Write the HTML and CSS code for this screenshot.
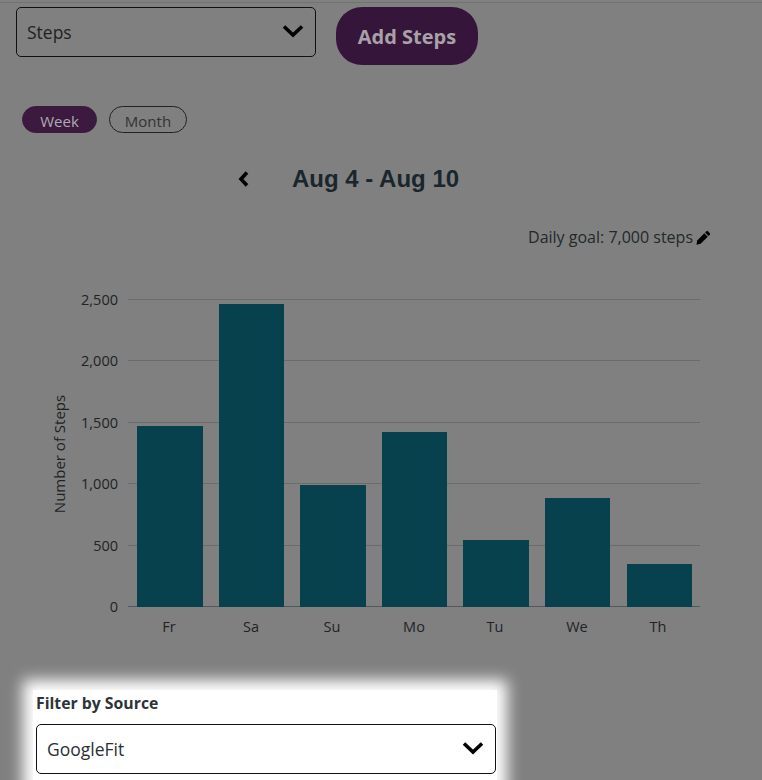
FILE: index.html
```html
<!DOCTYPE html>
<html>
<head>
  <title>Steps</title>
  <link rel="stylesheet" href="styles.css">
</head>
<body>
  <div class="page">
    <div class="top-row">
      <div class="select select-dark">
        <span>Steps</span>
        <svg class="chevron" viewBox="0 0 22 14"><path d="M2 2.5 L11 11 L20 2.5" /></svg>
      </div>
      <button class="add-button">Add Steps</button>
    </div>

    <div class="pills">
      <span class="pill pill-active">Week</span>
      <span class="pill">Month</span>
    </div>

    <div class="date-row">
      <svg class="back" viewBox="0 0 12 18"><path d="M9.5 2.5 L3.5 9 L9.5 15.5" /></svg>
      <h2 class="date-title">Aug 4 - Aug 10</h2>
    </div>

    <div class="goal">
      <span>Daily goal: 7,000 steps</span>
      <svg class="pencil" viewBox="0 0 16 16">
        <path d="M11.2 1.2 a1 1 0 0 1 1.4 0 l2.2 2.2 a1 1 0 0 1 0 1.4 l-1.5 1.5 -3.6 -3.6 z" />
        <path d="M8.9 3.5 l3.6 3.6 -7.6 7.6 -4.4 .9 .8 -4.5 z" />
      </svg>
    </div>

    <svg class="chart" viewBox="0 0 762 370" width="762" height="370">
      <g class="grid">
        <line x1="128" x2="700" y1="19.5" y2="19.5" />
        <line x1="128" x2="700" y1="80.5" y2="80.5" />
        <line x1="128" x2="700" y1="142.5" y2="142.5" />
        <line x1="128" x2="700" y1="203.5" y2="203.5" />
        <line x1="128" x2="700" y1="265.5" y2="265.5" />
        <line class="axis" x1="128" x2="700" y1="326.5" y2="326.5" />
      </g>
      <g class="bars">
        <rect x="137" y="146" width="66" height="181" />
        <rect x="219" y="24" width="65" height="303" />
        <rect x="300" y="205" width="66" height="122" />
        <rect x="382" y="152" width="65" height="175" />
        <rect x="463" y="260" width="66" height="67" />
        <rect x="545" y="218" width="65" height="109" />
        <rect x="627" y="284" width="65" height="43" />
      </g>
      <g class="y-labels">
        <text x="118" y="25">2,500</text>
        <text x="118" y="86">2,000</text>
        <text x="118" y="148">1,500</text>
        <text x="118" y="209">1,000</text>
        <text x="118" y="271">500</text>
        <text x="118" y="332">0</text>
      </g>
      <g class="x-labels">
        <text x="169" y="352">Fr</text>
        <text x="251" y="352">Sa</text>
        <text x="332" y="352">Su</text>
        <text x="414" y="352">Mo</text>
        <text x="495" y="352">Tu</text>
        <text x="577" y="352">We</text>
        <text x="658" y="352">Th</text>
      </g>
      <text class="y-title" transform="translate(65 174) rotate(-90)">Number of Steps</text>
    </svg>

    <div class="filter">
      <label class="filter-label">Filter by Source</label>
      <div class="select select-light">
        <span>GoogleFit</span>
        <svg class="chevron" viewBox="0 0 22 14"><path d="M2 2.5 L11 11 L20 2.5" /></svg>
      </div>
    </div>
  </div>
</body>
</html>
```

FILE: styles.css
```css
html, body {
  margin: 0;
  padding: 0;
  height: 100%;
  overflow: hidden;
  background-color: #808080;
}

.page {
  height: 780px;
  box-sizing: border-box;
  border-top: 1px solid #727272;
  margin-top: 2px;
  font-family: "Open Sans", sans-serif;
  color: #1c2226;
}

.top-row {
  display: flex;
  align-items: flex-start;
  gap: 20px;
  padding: 4px 0 0 16px;
}

.select {
  display: flex;
  align-items: center;
  justify-content: space-between;
  box-sizing: border-box;
  height: 50px;
  border: 1px solid #111;
  border-radius: 5px;
  font-size: 17.5px;
  padding: 0 11px 0 10px;
}

.select-dark {
  width: 300px;
  color: #222;
}

.select-dark span {
  margin-bottom: 1px;
}

.select-light {
  width: 460px;
  background-color: #fff;
  color: #2b2f33;
}

.chevron {
  width: 22px;
  height: 14px;
  margin-bottom: 3px;
}

.chevron path, .back path {
  fill: none;
  stroke: #000;
  stroke-width: 3.6;
}

.add-button {
  width: 142px;
  height: 58px;
  border: none;
  border-radius: 26px;
  background-color: #35163a;
  color: #a8a2a8;
  font-family: "Open Sans", sans-serif;
  font-size: 20px;
  font-weight: 700;
  padding: 0;
}

.pills {
  display: flex;
  gap: 12px;
  padding: 41px 0 0 22px;
}

.pill {
  box-sizing: border-box;
  height: 27px;
  line-height: 29px;
  width: 78px;
  text-align: center;
  border: 1px solid #222;
  border-radius: 14px;
  font-size: 15px;
  color: #333;
}

.pill-active {
  width: 75px;
  background-color: #3c1a3f;
  border-color: #3c1a3f;
  color: #b0aab0;
}

.date-row {
  display: flex;
  align-items: center;
  height: 34px;
  padding: 29px 0 0 237px;
}

.back {
  width: 13px;
  height: 18px;
}

.date-title {
  margin: 0 0 0 42px;
  font-family: "Liberation Sans", sans-serif;
  font-size: 24px;
  font-weight: 700;
  color: #1a262d;
}

.goal {
  display: flex;
  align-items: center;
  justify-content: flex-end;
  gap: 3px;
  height: 24px;
  margin-top: 29px;
  padding-right: 51px;
  font-size: 16px;
  color: #23282b;
}

.pencil {
  width: 15px;
  height: 15px;
  fill: #000;
}

.chart {
  display: block;
  margin-top: 31px;
  font-family: "Open Sans", sans-serif;
  font-size: 14.5px;
}

.grid line {
  stroke: #6b6b6b;
  stroke-width: 1;
}

.grid .axis {
  stroke: #4f5a5f;
}

.bars rect {
  fill: #08414e;
}

.chart text {
  fill: #1e2326;
}

.y-labels text {
  text-anchor: end;
}

.x-labels text, .y-title {
  text-anchor: middle;
}

.y-title {
  font-size: 15px;
}

.filter {
  box-sizing: border-box;
  width: 464px;
  height: 110px;
  margin: 40px 0 0 33px;
  padding: 0 1px 0 3px;
  background-color: #fff;
  box-shadow: 0 0 14px 10px #fff;
}

.filter-label {
  display: block;
  height: 34px;
  line-height: 26px;
  font-size: 15.8px;
  font-weight: 700;
  color: #2c3438;
}
```
